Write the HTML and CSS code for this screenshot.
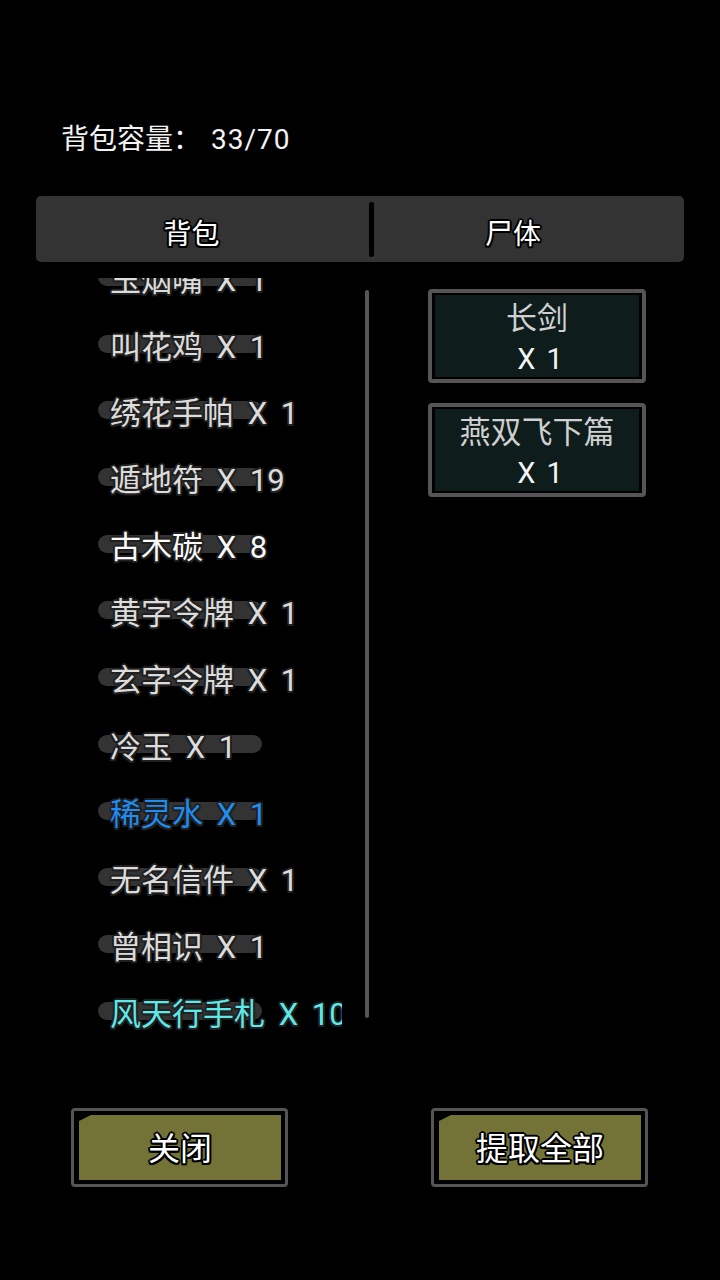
FILE: index.html
```html
<!DOCTYPE html>
<html lang="zh-CN">
<head>
<meta charset="utf-8">
<link rel="stylesheet" href="styles.css">
</head>
<body>
<div class="page">
  <div class="title">背包容量：<span class="cap">33/70</span></div>
  <div class="tabs">
    <div class="tab tab-left">背包</div>
    <div class="tab-sep"></div>
    <div class="tab tab-right">尸体</div>
  </div>
  <div class="main">
    <div class="bag">
      <div class="clip">
        <div class="list">
          <div class="item">玉烟嘴 X 1</div>
          <div class="item">叫花鸡 X 1</div>
          <div class="item">绣花手帕 X 1</div>
          <div class="item">遁地符 X 19</div>
          <div class="item white">古木碳 X 8</div>
          <div class="item">黄字令牌 X 1</div>
          <div class="item">玄字令牌 X 1</div>
          <div class="item">冷玉 X 1</div>
          <div class="item blue">稀灵水 X 1</div>
          <div class="item">无名信件 X 1</div>
          <div class="item">曾相识 X 1</div>
          <div class="item cyan">风天行手札 X 10</div>
        </div>
      </div>
      <div class="scrollbar"></div>
    </div>
    <div class="corpse">
      <div class="card"><div class="card-in"><div>长剑</div><div class="qty">X 1</div></div></div>
      <div class="card"><div class="card-in"><div>燕双飞下篇</div><div class="qty">X 1</div></div></div>
    </div>
  </div>
  <div class="footer">
    <div class="btn"><div class="btn-in">关闭</div></div>
    <div class="btn"><div class="btn-in">提取全部</div></div>
  </div>
</div>
</body>
</html>
```
FILE: styles.css
```css
html, body {
  margin: 0;
  padding: 0;
  background: #000;
}
body {
  width: 720px;
  height: 1280px;
  overflow: hidden;
  font-family: Roboto, "Noto Sans CJK SC", "Noto Sans", sans-serif;
  color: #e8e8e8;
}
.page {
  padding: 0 36px;
}
.title {
  padding-top: 120px;
  padding-left: 25px;
  height: 40px;
  line-height: 40px;
  font-size: 28px;
  color: #f2f2f2;
  margin-bottom: 36px;
}
.title .cap {
  margin-left: 10px;
  letter-spacing: 1px;
}
.tabs {
  display: flex;
  height: 66px;
  background: #333333;
  border-radius: 5px;
}
.tab {
  flex: 1;
  display: flex;
  align-items: center;
  justify-content: center;
  padding-top: 5px;
  box-sizing: border-box;
  font-size: 28px;
  color: #fff;
  text-shadow: 2px 0 0 #000, -2px 0 0 #000, 0 2px 0 #000, 0 -2px 0 #000,
    1.5px 1.5px 0 #000, -1.5px 1.5px 0 #000, 1.5px -1.5px 0 #000, -1.5px -1.5px 0 #000;
}
.tab-left {
  flex: 0 0 333px;
  padding-right: 22px;
}
.tab-right {
  padding-right: 32px;
}
.tab-sep {
  width: 5px;
  margin: 6px 0 5px;
  background: #000;
  border-radius: 3px;
}
.main {
  display: flex;
  height: 783px;
}
.bag {
  display: flex;
  width: 336px;
}
.clip {
  width: 306px;
  height: 767px;
  margin-top: 16px;
  overflow: hidden;
}
.list {
  position: relative;
  z-index: 0;
  margin-top: -30px;
}
.item {
  position: relative;
  height: 66.7px;
  line-height: 66.7px;
  padding-left: 74px;
  font-size: 31px;
  word-spacing: 6px;
  white-space: nowrap;
  color: #dcdcdc;
  text-shadow: 2px 0 0 #202020, -2px 0 0 #202020, 0 2px 0 #202020, 0 -2px 0 #202020,
    1.5px 1.5px 0 #202020, -1.5px 1.5px 0 #202020, 1.5px -1.5px 0 #202020, -1.5px -1.5px 0 #202020;
}
.item::before {
  content: "";
  position: absolute;
  left: 62px;
  top: 20px;
  width: 164px;
  height: 18px;
  border-radius: 9px;
  background: #333333;
  z-index: -1;
}
.item.white { color: #fafafa; }
.item.blue { color: #1f8cf0; }
.item.cyan { color: #5ee8e8; }
.scrollbar {
  width: 4px;
  height: 728px;
  margin-top: 28px;
  margin-left: 23px;
  background: #555;
  border-radius: 2px;
}
.corpse {
  display: flex;
  flex-direction: column;
  gap: 20px;
  padding-top: 27px;
  padding-left: 56px;
}
.card {
  width: 218px;
  height: 94px;
  box-sizing: border-box;
  border: 4px solid #555;
  border-radius: 4px;
  padding: 2px 3px;
  background: #000;
}
.card-in {
  height: 100%;
  box-sizing: border-box;
  padding-top: 6px;
  background: #0e1c1c;
  display: flex;
  flex-direction: column;
  align-items: center;
  justify-content: center;
  font-size: 31px;
  line-height: 40px;
  color: #d0d0d0;
}
.card-in .qty {
  color: #f4f4f4;
  font-size: 29px;
  word-spacing: 4px;
  padding-left: 6px;
}
.footer {
  display: flex;
  justify-content: space-between;
  padding: 0 36px 0 35px;
  margin-top: 63px;
}
.btn {
  width: 217px;
  height: 79px;
  box-sizing: border-box;
  border: 3px solid #555;
  border-radius: 4px;
  padding: 4px 4px 4px 5px;
  background: #000;
}
.btn-in {
  height: 100%;
  background: #737338;
  clip-path: polygon(12px 0, 100% 0, 100% 100%, 0 100%, 0 6px);
  display: flex;
  align-items: center;
  justify-content: center;
  padding-bottom: 3px;
  box-sizing: border-box;
  font-size: 32px;
  color: #fff;
  text-shadow: 2px 0 0 #000, -2px 0 0 #000, 0 2px 0 #000, 0 -2px 0 #000,
    1.5px 1.5px 0 #000, -1.5px 1.5px 0 #000, 1.5px -1.5px 0 #000, -1.5px -1.5px 0 #000;
}
```
